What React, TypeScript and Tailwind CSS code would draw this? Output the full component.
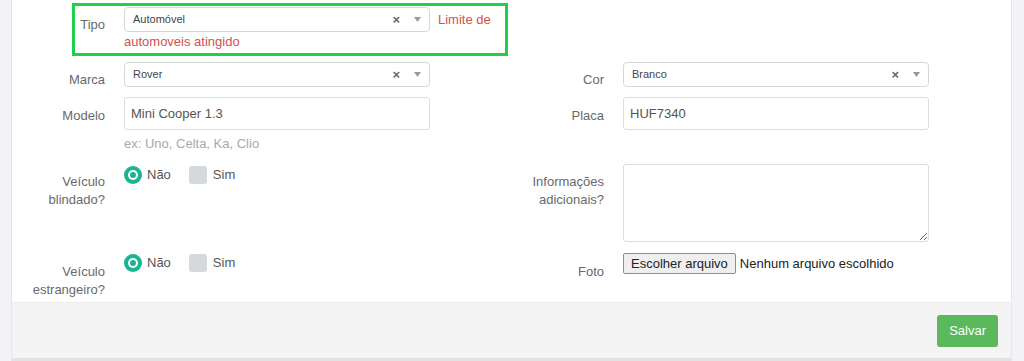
import React from "react";

const font = { fontFamily: '"Liberation Sans", Arial, sans-serif' };

function Select2({ value }: { value: string }) {
  return (
    <div className="flex h-[25px] w-[306px] items-center rounded-[4px] border border-[#d7d7d7] bg-white pl-[8px] pr-[6px]">
      <span className="flex-1 text-[11px] leading-none text-[#444]">{value}</span>
      <span className="mr-[14px] text-[13px] font-bold leading-none text-[#666]">×</span>
      <svg width="7" height="5" viewBox="0 0 7 5" className="mr-[2px]">
        <path d="M0 0 L7 0 L3.5 5 Z" fill="#999" />
      </svg>
    </div>
  );
}

function Label({ children, pt }: { children: React.ReactNode; pt: string }) {
  return (
    <div className={`w-[93px] shrink-0 text-right text-[13px] leading-[18px] text-[#676a6c] ${pt}`}>
      {children}
    </div>
  );
}

function RadioPair() {
  return (
    <div className="flex items-center h-[18px] text-[13px] text-[#555]">
      <span className="flex h-[18px] w-[18px] items-center justify-center rounded-full bg-[#1ab394]">
        <span className="flex h-[10px] w-[10px] items-center justify-center rounded-full bg-white">
          <span className="h-[6px] w-[6px] rounded-full bg-[#1ab394]" />
        </span>
      </span>
      <span className="ml-[5px]">Não</span>
      <span className="ml-[18px] h-[18px] w-[18px] rounded-[3px] bg-[#d5d9dc]" />
      <span className="ml-[6px]">Sim</span>
    </div>
  );
}

export default function App() {
  return (
    <div className="flex h-[361px] w-[1024px] overflow-hidden bg-[#f1f3f7] pl-[11px] pr-[12px]" style={font}>
      <div className="relative flex w-[1001px] flex-col border-x border-[#e3e6ea] bg-white">
        {/* body */}
        <div className="relative h-[291px] pt-[7px]">
          {/* Row A: Tipo */}
          <div className="flex">
            <div className="w-[93px] shrink-0 pt-[8px] text-right text-[13px] leading-[20px] text-[#676a6c]">Tipo</div>
            <div className="ml-[19px]">
              <div className="flex items-center">
                <Select2 value="Automóvel" />
                <span className="ml-[8px] text-[13px] text-[#d25050]">Limite de</span>
              </div>
              <div className="text-[13px] leading-[20px] text-[#d25050]">automoveis atingido</div>
            </div>
          </div>

          {/* Row B: Marca / Cor */}
          <div className="mt-[10px] flex h-[35px]">
            <div className="flex w-[499px]">
              <div className="w-[93px] shrink-0 pt-[8px] text-right text-[13px] leading-[20px] text-[#676a6c]">Marca</div>
              <div className="ml-[19px]"><Select2 value="Rover" /></div>
            </div>
            <div className="flex">
              <div className="w-[93px] shrink-0 pt-[8px] text-right text-[13px] leading-[20px] text-[#676a6c]">Cor</div>
              <div className="ml-[19px]"><Select2 value="Branco" /></div>
            </div>
          </div>

          {/* Row C: Modelo / Placa */}
          <div className="flex h-[67px]">
            <div className="flex w-[499px]">
              <div className="w-[93px] shrink-0 pt-[9px] text-right text-[13px] leading-[20px] text-[#676a6c]">Modelo</div>
              <div className="ml-[19px]">
                <div className="flex h-[33px] w-[306px] items-center rounded-[3px] border border-[#dcdddf] px-[6px] text-[13px] text-[#555]">Mini Cooper 1.3</div>
                <div className="mt-[5px] text-[13px] leading-[18px] text-[#a7a9ab]">ex: Uno, Celta, Ka, Clio</div>
              </div>
            </div>
            <div className="flex">
              <div className="w-[93px] shrink-0 pt-[9px] text-right text-[13px] leading-[20px] text-[#676a6c]">Placa</div>
              <div className="ml-[19px]">
                <div className="flex h-[33px] w-[306px] items-center rounded-[3px] border border-[#dcdddf] px-[6px] text-[13px] text-[#555]">HUF7340</div>
              </div>
            </div>
          </div>

          {/* Row D: Blindado / Informações */}
          <div className="flex h-[88px]">
            <div className="flex w-[499px]">
              <Label pt="pt-[9px]">Veículo<br />blindado?</Label>
              <div className="ml-[19px] pt-[2px]"><RadioPair /></div>
            </div>
            <div className="flex">
              <Label pt="pt-[9px]">Informações<br />adicionais?</Label>
              <div className="ml-[19px]">
                <textarea className="block h-[78px] w-[306px] rounded-[3px] border border-[#dcdddf] outline-none" />
              </div>
            </div>
          </div>

          {/* Row E: Estrangeiro / Foto */}
          <div className="flex">
            <div className="flex w-[499px]">
              <Label pt="pt-[11px]">Veículo<br />estrangeiro?</Label>
              <div className="ml-[19px] pt-[2px]"><RadioPair /></div>
            </div>
            <div className="flex">
              <div className="w-[93px] shrink-0 pt-[11px] text-right text-[13px] leading-[18px] text-[#676a6c]">Foto</div>
              <div className="ml-[19px] flex h-[22px] items-center pt-[1px] text-[13px] text-[#222]">
                <span className="flex h-[21px] items-center rounded-[2px] border border-[#8f8f8f] bg-[#efefef] px-[7px]">Escolher arquivo</span>
                <span className="ml-[4px]">Nenhum arquivo escolhido</span>
              </div>
            </div>
          </div>

          {/* annotation overlay */}
          <div className="pointer-events-none absolute left-[60px] top-[3px] h-[53px] w-[436px] border-[3px] border-[#1ed14b]" />
        </div>

        <div className="h-[12px] border-b border-[#ececec] bg-white" />
        {/* footer */}
        <div className="flex h-[55px] items-start justify-end bg-[#f4f4f4] pr-[13px] pt-[12px]">
          <button className="h-[32px] rounded-[3px] bg-[#5cb85c] px-[12px] text-[13px] text-white">Salvar</button>
        </div>
        <div className="h-[3px] bg-[#e2e2e2]" />
      </div>
    </div>
  );
}
